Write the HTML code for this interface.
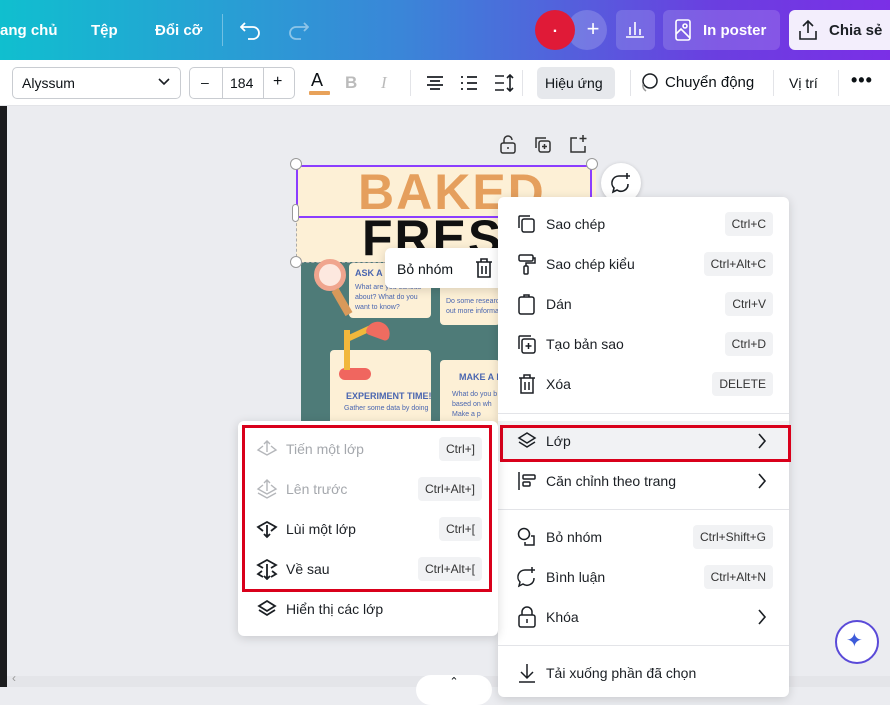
<!DOCTYPE html>
<html><head><meta charset="utf-8"><style>
*{box-sizing:border-box;margin:0;padding:0}
body{width:890px;height:687px;overflow:hidden;position:relative;font-family:"Liberation Sans","Noto Sans CJK SC",sans-serif;background:#ebecf0;color:#0d1216}
.abs{position:absolute}
.top{left:0;top:0;width:890px;height:60px;background:linear-gradient(90deg,#10bfcf 0%,#3a86d8 45%,#6a3fe0 80%,#7b2fe6 100%)}
.tw{color:#fff;font-size:15px;font-weight:bold;top:22px}
.tb{left:0;top:60px;width:890px;height:46px;background:#fff;border-bottom:1px solid #e3e4e8}
.t14{font-size:14px}
.menu{background:#fff;border-radius:6px;box-shadow:0 2px 10px rgba(0,0,0,.15)}
.it{position:absolute;left:0;right:0;height:40px;display:flex;align-items:center;font-size:14px;color:#1b1f24}
.it svg{position:absolute;left:18px}
.it .lb{position:absolute;left:48px}
.kb{position:absolute;right:16px;background:#f1f2f4;border-radius:4px;font-size:12px;color:#333;padding:4px 7px;height:24px;line-height:16px}
.sep{position:absolute;left:0;right:0;height:1px;background:#e3e4e8}
.it svg.chev{left:auto;right:22px}
</style></head><body>
<div class="abs" style="left:0;top:60px;width:7px;height:627px;background:#1b1c1e"></div>
<div class="abs" style="left:7px;top:676px;width:883px;height:11px;background:#e4e5e9"></div>
<div class="abs" style="left:12px;top:671px;font-size:12px;color:#999">‹</div>
<div class="abs" style="left:416px;top:675px;width:76px;height:30px;border-radius:15px;background:#fff;text-align:center;font-size:11px">⌃</div>
<div class="abs top"></div>
<div class="abs tw" style="left:0">ang chủ</div>
<div class="abs tw" style="left:91px">Tệp</div>
<div class="abs tw" style="left:155px">Đổi cỡ</div>
<div class="abs" style="left:222px;top:14px;width:1px;height:32px;background:rgba(255,255,255,.35)"></div>
<svg class="abs" style="left:240px;top:20px" width="22" height="20" viewBox="0 0 22 20" fill="none" stroke="#fff" stroke-width="1.8"><path d="M5 3 1 7l4 4M1 7h12a6 6 0 0 1 0 12H8"/></svg>
<svg class="abs" style="left:287px;top:20px" width="22" height="20" viewBox="0 0 22 20" fill="none" stroke="rgba(255,255,255,.45)" stroke-width="1.8"><path d="M17 3l4 4-4 4M21 7H9a6 6 0 0 0 0 12h5"/></svg>
<div class="abs" style="left:567px;top:10px;width:40px;height:40px;border-radius:20px;background:rgba(255,255,255,.18);color:#fff;font-size:22px;text-align:center;line-height:38px;padding-left:12px">+</div>
<div class="abs" style="left:535px;top:10px;width:40px;height:40px;border-radius:20px;background:#e01a37;color:#fff;text-align:center;line-height:36px;font-weight:bold">.</div>
<div class="abs" style="left:616px;top:10px;width:39px;height:40px;border-radius:6px;background:rgba(255,255,255,.15)"></div>
<svg class="abs" style="left:625px;top:19px" width="20" height="20" viewBox="0 0 20 20" fill="none" stroke="#fff" stroke-width="1.6"><path d="M1 18h18M5 16V8M10 16V3M15 16V10"/></svg>
<div class="abs" style="left:663px;top:10px;width:117px;height:40px;border-radius:6px;background:rgba(255,255,255,.15)"></div>
<svg class="abs" style="left:674px;top:19px" width="18" height="22" viewBox="0 0 18 22" fill="none" stroke="#fff" stroke-width="1.6"><rect x="2" y="1" width="14" height="20" rx="2"/><circle cx="11" cy="7" r="2"/><path d="M2 15l5-5 9 9"/></svg>
<div class="abs tw" style="left:703px">In poster</div>
<div class="abs" style="left:789px;top:10px;width:110px;height:40px;border-radius:6px;background:#f3eefc"></div>
<svg class="abs" style="left:798px;top:19px" width="20" height="22" viewBox="0 0 20 22" fill="none" stroke="#1b1f24" stroke-width="1.6"><path d="M10 14V2M5 7l5-5 5 5M2 12v8h16v-8"/></svg>
<div class="abs" style="left:829px;top:22px;font-size:15px;font-weight:bold;color:#1b1f24">Chia sẻ</div>

<div class="abs tb"></div>
<div class="abs" style="left:12px;top:67px;width:169px;height:32px;border:1px solid #c9ccd1;border-radius:5px"></div>
<div class="abs t14" style="left:22px;top:75px">Alyssum</div>
<svg class="abs" style="left:158px;top:78px" width="12" height="8" viewBox="0 0 12 8" fill="none" stroke="#1b1f24" stroke-width="1.6"><path d="M1 1l5 5 5-5"/></svg>
<div class="abs" style="left:189px;top:67px;width:106px;height:32px;border:1px solid #c9ccd1;border-radius:5px"></div>
<div class="abs" style="left:222px;top:67px;width:1px;height:32px;background:#c9ccd1"></div>
<div class="abs" style="left:263px;top:67px;width:1px;height:32px;background:#c9ccd1"></div>
<div class="abs t14" style="left:201px;top:74px">–</div>
<div class="abs t14" style="left:230px;top:75px">184</div>
<div class="abs t14" style="left:273px;top:73px;font-size:16px">+</div>
<div class="abs" style="left:311px;top:70px;font-size:18px">A</div>
<div class="abs" style="left:309px;top:91px;width:21px;height:4px;background:#e8a25a;border-radius:1px"></div>
<div class="abs" style="left:345px;top:73px;font-size:17px;font-weight:bold;color:#bbb">B</div>
<div class="abs" style="left:381px;top:73px;font-size:17px;font-style:italic;color:#bbb;font-family:'Liberation Serif',serif">I</div>
<div class="abs" style="left:410px;top:70px;width:1px;height:26px;background:#e3e4e8"></div>
<svg class="abs" style="left:426px;top:74px" width="18" height="18" viewBox="0 0 18 18" stroke="#1b1f24" stroke-width="1.8"><path d="M1 3h16M4 7h10M1 11h16M4 15h10"/></svg>
<svg class="abs" style="left:460px;top:74px" width="18" height="18" viewBox="0 0 18 18" stroke="#1b1f24" stroke-width="1.8"><path d="M1 3h2M7 3h10M1 9h2M7 9h10M1 15h2M7 15h10"/></svg>
<svg class="abs" style="left:494px;top:74px" width="20" height="18" viewBox="0 0 20 18" fill="none" stroke="#1b1f24" stroke-width="1.6"><path d="M1 2h9M1 9h9M1 16h9M16 1v16M13 4l3-3 3 3M13 14l3 3 3-3"/></svg>
<div class="abs" style="left:522px;top:70px;width:1px;height:26px;background:#e3e4e8"></div>
<div class="abs" style="left:537px;top:67px;width:78px;height:32px;background:#e6e8ec;border-radius:5px"></div>
<div class="abs t14" style="left:545px;top:75px">Hiệu ứng</div>
<div class="abs" style="left:630px;top:70px;width:1px;height:26px;background:#e3e4e8"></div>
<svg class="abs" style="left:638px;top:72px" width="22" height="22" viewBox="0 0 22 22" fill="none" stroke="#1b1f24" stroke-width="1.5"><circle cx="12" cy="9" r="7"/><path d="M5 12a7 7 0 0 0 3 7" stroke="#999"/></svg>
<div class="abs" style="left:665px;top:74px;font-size:15px">Chuyển động</div>
<div class="abs" style="left:773px;top:70px;width:1px;height:26px;background:#e3e4e8"></div>
<div class="abs t14" style="left:789px;top:75px">Vị trí</div>
<div class="abs" style="left:838px;top:70px;width:1px;height:26px;background:#e3e4e8"></div>
<div class="abs" style="left:851px;top:70px;font-size:18px;font-weight:bold;letter-spacing:1px">•••</div>

<svg class="abs" style="left:499px;top:135px" width="18" height="20" viewBox="0 0 18 20" fill="none" stroke="#333" stroke-width="1.5"><rect x="2" y="8" width="14" height="10" rx="2"/><path d="M5 8V5a4 4 0 0 1 8 0"/><path d="M9 12v2"/></svg>
<svg class="abs" style="left:534px;top:136px" width="18" height="18" viewBox="0 0 18 18" fill="none" stroke="#333" stroke-width="1.5"><rect x="5" y="5" width="11" height="11" rx="2"/><path d="M2 12V2h10M10.5 8v5M8 10.5h5"/></svg>
<svg class="abs" style="left:569px;top:134px" width="18" height="20" viewBox="0 0 18 20" fill="none" stroke="#333" stroke-width="1.5"><path d="M8 4H2v14h14v-6M14 1v7M10.5 4.5h7"/></svg>

<div class="abs" style="left:296px;top:165px;width:300px;height:100px;background:#fdf0d6"></div>
<div class="abs" style="left:301px;top:262px;width:200px;height:160px;background:#4e7b78"></div>
<div class="abs" style="left:358px;top:164px;font-size:50px;font-weight:bold;color:#e59f5d;letter-spacing:2px;line-height:56px">BAKED</div>
<div class="abs" style="left:362px;top:210px;font-size:50px;font-weight:bold;color:#111;letter-spacing:2px;line-height:56px">FRESH</div>
<div class="abs" style="left:296px;top:165px;width:296px;height:53px;border:2px solid #8b3dff"></div>
<div class="abs" style="left:296px;top:218px;width:1px;height:44px;border-left:1px dashed #aaa"></div>
<div class="abs" style="left:296px;top:262px;width:90px;border-top:1px dashed #aaa"></div>
<div class="abs" style="left:290px;top:158px;width:12px;height:12px;border-radius:6px;background:#fff;border:1px solid #999"></div>
<div class="abs" style="left:586px;top:158px;width:12px;height:12px;border-radius:6px;background:#fff;border:1px solid #999"></div>
<div class="abs" style="left:290px;top:256px;width:12px;height:12px;border-radius:6px;background:#fff;border:1px solid #999"></div>
<div class="abs" style="left:292px;top:204px;width:7px;height:18px;border-radius:4px;background:#fff;border:1px solid #999"></div>
<div class="abs" style="left:349px;top:263px;width:82px;height:55px;background:#fdf0d6;border-radius:4px"></div>
<div class="abs" style="left:355px;top:268px;font-size:9px;font-weight:bold;color:#4a66b0">ASK A Q</div>
<div class="abs" style="left:355px;top:283px;font-size:7px;color:#4a66b0;line-height:10px">What are you curious<br>about? What do you<br>want to know?</div>
<div class="abs" style="left:440px;top:270px;width:60px;height:55px;background:#fdf0d6;border-radius:4px"></div>
<div class="abs" style="left:446px;top:297px;font-size:7px;color:#4a66b0;line-height:10px">Do some research<br>out more informa</div>
<div class="abs" style="left:330px;top:350px;width:101px;height:75px;background:#fdf0d6;border-radius:4px"></div>
<div class="abs" style="left:346px;top:391px;font-size:9px;font-weight:bold;color:#4a66b0">EXPERIMENT TIME!</div>
<div class="abs" style="left:344px;top:405px;font-size:7px;color:#4a66b0">Gather some data by doing</div>
<div class="abs" style="left:440px;top:360px;width:60px;height:65px;background:#fdf0d6;border-radius:4px"></div>
<div class="abs" style="left:459px;top:372px;font-size:9px;font-weight:bold;color:#4a66b0">MAKE A H</div>
<div class="abs" style="left:452px;top:390px;font-size:7px;color:#4a66b0;line-height:10px">What do you b<br>based on wh<br>Make a p</div>
<div class="abs" style="left:314px;top:259px;width:32px;height:32px;border-radius:16px;border:5px solid #f0a58e;background:#fde8df"></div>
<div class="abs" style="left:338px;top:288px;width:8px;height:28px;background:#d8995a;transform:rotate(-30deg)"></div>
<div class="abs" style="left:339px;top:368px;width:32px;height:12px;border-radius:6px;background:#f0665f"></div>
<div class="abs" style="left:344px;top:330px;width:6px;height:40px;background:#f1b73c"></div>
<div class="abs" style="left:345px;top:330px;width:30px;height:6px;background:#f1b73c;transform:rotate(-25deg)"></div>
<div class="abs" style="left:367px;top:322px;width:24px;height:16px;border-radius:12px 12px 4px 4px;background:#ef6c60;transform:rotate(20deg)"></div>

<div class="abs" style="left:601px;top:163px;width:40px;height:40px;border-radius:20px;background:#fff;box-shadow:0 1px 4px rgba(0,0,0,.2)"></div>
<svg class="abs" style="left:610px;top:172px" width="22" height="22" viewBox="0 0 22 22" fill="none" stroke="#1b1f24" stroke-width="1.6"><path d="M15 4H9a7 7 0 0 0-5 12l-1 4 4-2a7 7 0 0 0 11-6M17 1v6M14 4h6"/></svg>

<div class="abs menu" style="left:385px;top:248px;width:120px;height:40px;border-radius:6px"></div>
<div class="abs t14" style="left:397px;top:261px">Bỏ nhóm</div>
<svg class="abs" style="left:474px;top:257px" width="20" height="22" viewBox="0 0 20 22" fill="none" stroke="#1b1f24" stroke-width="1.6"><path d="M2 5h16M7 5V2h6v3M4 5v15h12V5M8 9v8M12 9v8"/></svg>

<div class="abs menu" style="left:498px;top:197px;width:291px;height:500px">
 <div class="it" style="top:7px"><svg width="22" height="22" viewBox="0 0 22 22" fill="none" stroke="#1b1f24" stroke-width="1.5"><rect x="6" y="6" width="12" height="13" rx="2"/><path d="M3 15V4a1 1 0 0 1 1-1h10"/></svg><span class="lb">Sao chép</span><span class="kb">Ctrl+C</span></div>
 <div class="it" style="top:47px"><svg width="22" height="22" viewBox="0 0 22 22" fill="none" stroke="#1b1f24" stroke-width="1.5"><rect x="3" y="2" width="14" height="6" rx="1.5"/><path d="M17 5h2v5h-9v3"/><rect x="8" y="13" width="4" height="8" rx="1"/></svg><span class="lb">Sao chép kiểu</span><span class="kb">Ctrl+Alt+C</span></div>
 <div class="it" style="top:87px"><svg width="22" height="22" viewBox="0 0 22 22" fill="none" stroke="#1b1f24" stroke-width="1.5"><rect x="3" y="4" width="15" height="17" rx="2"/><path d="M8 4V2h5v2"/></svg><span class="lb">Dán</span><span class="kb">Ctrl+V</span></div>
 <div class="it" style="top:127px"><svg width="22" height="22" viewBox="0 0 22 22" fill="none" stroke="#1b1f24" stroke-width="1.5"><rect x="6" y="6" width="13" height="14" rx="2"/><path d="M3 16V4a1 1 0 0 1 1-1h11M12.5 10v6M9.5 13h6"/></svg><span class="lb">Tạo bản sao</span><span class="kb">Ctrl+D</span></div>
 <div class="it" style="top:167px"><svg width="22" height="22" viewBox="0 0 22 22" fill="none" stroke="#1b1f24" stroke-width="1.5"><path d="M3 5h16M8 5V2h6v3M5 5v15h12V5M9 9v8M13 9v8"/></svg><span class="lb">Xóa</span><span class="kb">DELETE</span></div>
 <div class="sep" style="top:216px"></div>
 <div class="it" style="top:224px;background:#f1f2f4"><svg width="22" height="22" viewBox="0 0 22 22" fill="none" stroke="#1b1f24" stroke-width="1.5"><path d="M11 3l8 5-8 5-8-5z"/><path d="M3 12l8 5 8-5"/></svg><span class="lb">Lớp</span><svg class="chev" width="10" height="16" viewBox="0 0 10 16" fill="none" stroke="#1b1f24" stroke-width="1.6"><path d="M2 1l6 7-6 7"/></svg></div>
 <div class="it" style="top:264px"><svg width="22" height="22" viewBox="0 0 22 22" fill="none" stroke="#1b1f24" stroke-width="1.5"><path d="M3 2v18"/><rect x="7" y="5" width="12" height="4" rx="1"/><rect x="7" y="12" width="7" height="4" rx="1"/></svg><span class="lb">Căn chỉnh theo trang</span><svg class="chev" width="10" height="16" viewBox="0 0 10 16" fill="none" stroke="#1b1f24" stroke-width="1.6"><path d="M2 1l6 7-6 7"/></svg></div>
 <div class="sep" style="top:312px"></div>
 <div class="it" style="top:320px"><svg width="22" height="22" viewBox="0 0 22 22" fill="none" stroke="#1b1f24" stroke-width="1.5"><circle cx="8" cy="8" r="5.5"/><path d="M15 10h3v9H9v-3"/></svg><span class="lb">Bỏ nhóm</span><span class="kb">Ctrl+Shift+G</span></div>
 <div class="it" style="top:360px"><svg width="22" height="22" viewBox="0 0 22 22" fill="none" stroke="#1b1f24" stroke-width="1.5"><path d="M13 4H9a7 7 0 0 0-5 12l-1 4 4-2a7 7 0 0 0 11-6M16 1v6M13 4h6"/></svg><span class="lb">Bình luận</span><span class="kb">Ctrl+Alt+N</span></div>
 <div class="it" style="top:400px"><svg width="22" height="22" viewBox="0 0 22 22" fill="none" stroke="#1b1f24" stroke-width="1.5"><rect x="3" y="9" width="16" height="12" rx="2"/><path d="M6 9V6a5 5 0 0 1 10 0v3M11 13v4"/></svg><span class="lb">Khóa</span><svg class="chev" width="10" height="16" viewBox="0 0 10 16" fill="none" stroke="#1b1f24" stroke-width="1.6"><path d="M2 1l6 7-6 7"/></svg></div>
 <div class="sep" style="top:448px"></div>
 <div class="it" style="top:456px"><svg width="22" height="22" viewBox="0 0 22 22" fill="none" stroke="#1b1f24" stroke-width="1.5"><path d="M11 2v13M5 10l6 6 6-6M3 20h16"/></svg><span class="lb">Tải xuống phần đã chọn</span></div>
</div>
<div class="abs" style="left:500px;top:425px;width:291px;height:37px;border:3px solid #d9001b"></div>

<div class="abs menu" style="left:238px;top:421px;width:260px;height:215px">
 <div class="it" style="top:8px;color:#a5a8ad"><svg width="22" height="22" viewBox="0 0 22 22" fill="none" stroke="#b4b6ba" stroke-width="1.4"><path d="M7 8L2 12l9 5 9-5-5-4M11 14V3M8 6l3-3 3 3"/></svg><span class="lb">Tiến một lớp</span><span class="kb">Ctrl+]</span></div>
 <div class="it" style="top:48px;color:#a5a8ad"><svg width="22" height="22" viewBox="0 0 22 22" fill="none" stroke="#b4b6ba" stroke-width="1.4"><path d="M7 7L2 11l9 5 9-5-5-4M11 13V2M8 5l3-3 3 3M2 15l9 5 9-5"/></svg><span class="lb">Lên trước</span><span class="kb">Ctrl+Alt+]</span></div>
 <div class="it" style="top:88px"><svg width="22" height="22" viewBox="0 0 22 22" fill="none" stroke="#1b1f24" stroke-width="1.8"><path d="M7 13L2 9l9-5 9 5-5 4M11 7v12M8 16l3 3 3-3"/></svg><span class="lb">Lùi một lớp</span><span class="kb">Ctrl+[</span></div>
 <div class="it" style="top:128px"><svg width="22" height="22" viewBox="0 0 22 22" fill="none" stroke="#1b1f24" stroke-width="1.8"><path d="M7 10L2 7l9-5 9 5-5 3M6 13l-4 3 5 3M16 13l4 3-5 3M11 6v15M8 18l3 3 3-3"/></svg><span class="lb">Về sau</span><span class="kb">Ctrl+Alt+[</span></div>
 <div class="it" style="top:168px"><svg width="22" height="22" viewBox="0 0 22 22" fill="none" stroke="#1b1f24" stroke-width="1.8"><path d="M11 3l8 5-8 5-8-5z"/><path d="M3 12l8 5 8-5"/></svg><span class="lb">Hiển thị các lớp</span></div>
</div>
<div class="abs" style="left:242px;top:425px;width:250px;height:167px;border:3px solid #d9001b"></div>

<div class="abs" style="left:835px;top:620px;width:44px;height:44px;border-radius:22px;background:#fff;border:2px solid #5a4ad8"></div>
<div class="abs" style="left:846px;top:628px;font-size:20px;color:#3d5bd9">✦</div>
</body></html>
